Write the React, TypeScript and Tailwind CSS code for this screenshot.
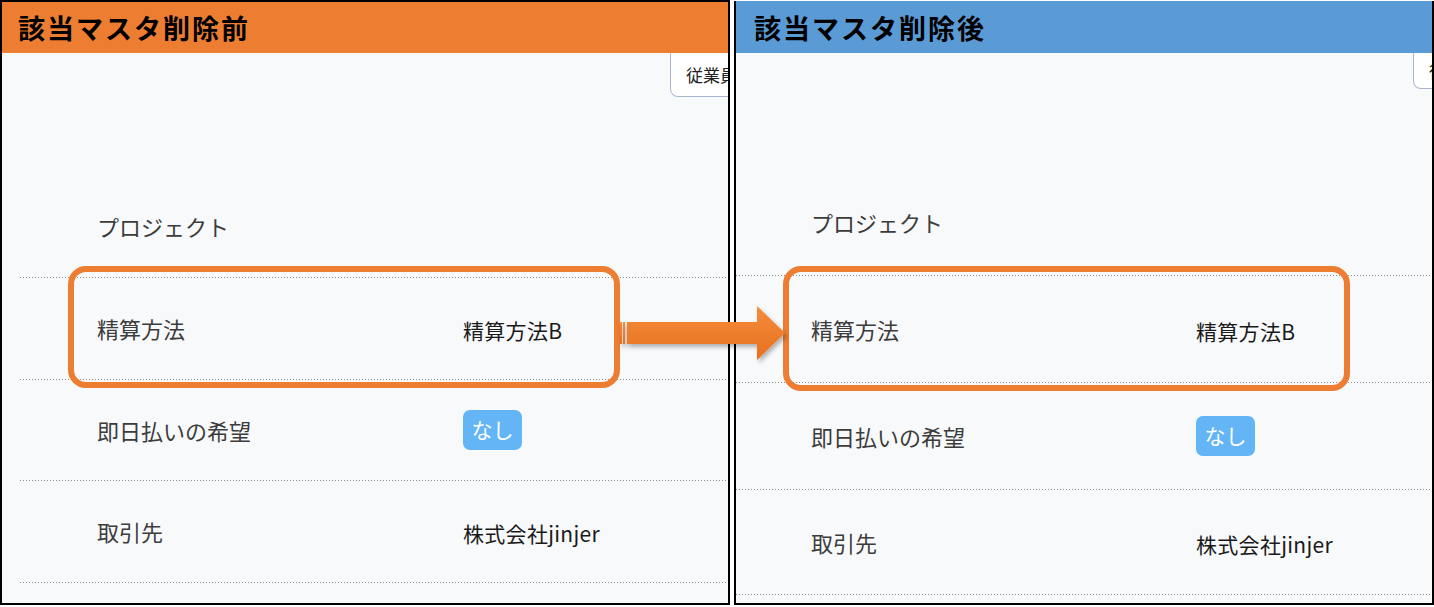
import React from "react";

const FONT = { fontFamily: '"Noto Sans CJK JP", "Noto Sans", sans-serif' };

type Row = { label: string; value?: string; badge?: string };

const rows: Row[] = [
  { label: "プロジェクト" },
  { label: "精算方法", value: "精算方法B" },
  { label: "即日払いの希望", badge: "なし" },
  { label: "取引先", value: "株式会社jinjer" },
];

function DottedLine() {
  return (
    <div className="h-px w-full bg-[repeating-linear-gradient(to_right,#8c8c8c_0_1px,transparent_1px_3px)]" />
  );
}

function Panel({
  title,
  headerClass,
  rowHeights,
  topSpace,
  lineIndent,
  labelPad,
  labelCol,
  outerClass,
  buttonClass,
}: {
  title: string;
  headerClass: string;
  rowHeights: number[];
  topSpace: number;
  lineIndent: string;
  labelPad: string;
  labelCol: string;
  outerClass: string;
  buttonClass: string;
}) {
  return (
    <div className={`flex flex-col overflow-hidden bg-[#f8f9fb] ${outerClass}`}>
      <div className={`flex items-center shrink-0 ${headerClass}`}>
        <span className="text-[27px] font-bold tracking-[2px] text-black leading-none">{title}</span>
      </div>
      <div className="relative flex flex-col">
        <div className="flex justify-end" style={{ height: topSpace }}>
          <div
            className={`self-start flex items-center rounded-bl-[8px] border border-t-0 border-[#a9b6cc] bg-white pl-[15px] pr-[6px] text-[17px] text-[#222] whitespace-nowrap ${buttonClass}`}
          >
            従業員情報
          </div>
        </div>
        {rows.map((r, i) => (
          <div key={r.label} className={`flex flex-col ${lineIndent}`} style={{ height: rowHeights[i] }}>
            <div className={`flex flex-1 items-center ${labelPad}`}>
              <div className={`${labelCol} shrink-0 text-[22px] text-[#3c3c3c]`}>{r.label}</div>
              {r.value && <div className="pt-[5px] text-[21px] tracking-[0.3px] text-[#1a1a1a]">{r.value}</div>}
              {r.badge && (
                <div className="flex h-[40px] w-[59px] items-center justify-center rounded-[7px] bg-[#64b5f6] text-[21px] text-white">
                  {r.badge}
                </div>
              )}
            </div>
            <DottedLine />
          </div>
        ))}
      </div>
    </div>
  );
}

function Arrow() {
  return (
    <svg
      className="absolute left-[612px] top-[298px]"
      width="186"
      height="74"
      viewBox="0 0 186 74"
    >
      <defs>
        <linearGradient id="ag" x1="0" y1="0" x2="0" y2="1">
          <stop offset="0" stopColor="#f58c3c" />
          <stop offset="1" stopColor="#e6701f" />
        </linearGradient>
        <filter id="sh" x="-10%" y="-20%" width="130%" height="160%">
          <feDropShadow dx="2" dy="3" stdDeviation="2" floodColor="#000" floodOpacity="0.3" />
        </filter>
      </defs>
      <g filter="url(#sh)" fill="url(#ag)">
        <rect x="8" y="24" width="2" height="22" />
        <rect x="11" y="24" width="2" height="22" />
        <polygon points="15,24 145,24 145,8 173,35 145,62 145,46 15,46" />
      </g>
    </svg>
  );
}

export default function App() {
  return (
    <div className="relative h-[607px] w-[1434px] overflow-hidden bg-white" style={FONT}>
      <div className="flex h-full">
        <Panel
          title="該当マスタ削除前"
          headerClass="h-[51px] bg-[#ed7d31] pl-[16px]"
          rowHeights={[102, 102, 101, 102]}
          topSpace={123}
          lineIndent="ml-[18px]"
          labelPad="pl-[77px]"
          labelCol="w-[366px]"
          outerClass="h-[605px] w-[730px] border-2 border-black"
          buttonClass="h-[44px] -mr-[50px]"
        />
        <Panel
          title="該当マスタ削除後"
          headerClass="h-[52px] bg-[#5b9bd5] pl-[18px]"
          rowHeights={[107, 107, 107, 105]}
          topSpace={116}
          lineIndent="ml-0"
          labelPad="pl-[75px]"
          labelCol="w-[385px]"
          outerClass="ml-[4px] mt-[1px] h-[604px] w-[700px] border-x-2 border-b-2 border-black"
          buttonClass="h-[36px] -mr-[89px]"
        />
      </div>
      <div className="absolute left-[68px] top-[266px] h-[122px] w-[552px] rounded-[18px] border-[6px] border-[#ed7d31]" />
      <div className="absolute left-[783px] top-[266px] h-[125px] w-[567px] rounded-[18px] border-[6px] border-[#ed7d31]" />
      <Arrow />
    </div>
  );
}
